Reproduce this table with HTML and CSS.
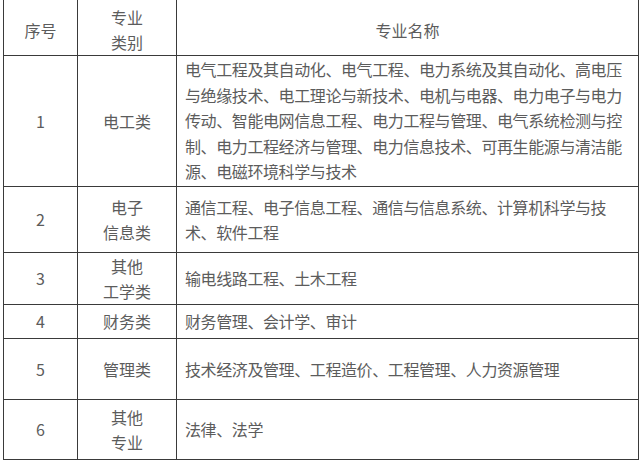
FILE: index.html
```html
<!DOCTYPE html>
<html lang="zh">
<head>
<meta charset="utf-8">
<link rel="stylesheet" href="styles.css">
</head>
<body>
<table class="majors">
  <colgroup>
    <col class="c-no">
    <col class="c-cat">
    <col class="c-name">
  </colgroup>
  <tr class="r-head">
    <td class="center">序号</td>
    <td class="center">专业<br>类别</td>
    <td class="center">专业名称</td>
  </tr>
  <tr class="r1">
    <td class="center">1</td>
    <td class="center">电工类</td>
    <td class="list">电气工程及其自动化、电气工程、电力系统及其自动化、高电压与绝缘技术、电工理论与新技术、电机与电器、电力电子与电力传动、智能电网信息工程、电力工程与管理、电气系统检测与控制、电力工程经济与管理、电力信息技术、可再生能源与清洁能源、电磁环境科学与技术</td>
  </tr>
  <tr class="r2">
    <td class="center">2</td>
    <td class="center">电子<br>信息类</td>
    <td class="list">通信工程、电子信息工程、通信与信息系统、计算机科学与技术、软件工程</td>
  </tr>
  <tr class="r3">
    <td class="center">3</td>
    <td class="center">其他<br>工学类</td>
    <td class="list">输电线路工程、土木工程</td>
  </tr>
  <tr class="r4">
    <td class="center">4</td>
    <td class="center">财务类</td>
    <td class="list">财务管理、会计学、审计</td>
  </tr>
  <tr class="r5">
    <td class="center">5</td>
    <td class="center">管理类</td>
    <td class="list">技术经济及管理、工程造价、工程管理、人力资源管理</td>
  </tr>
  <tr class="r6">
    <td class="center">6</td>
    <td class="center">其他<br>专业</td>
    <td class="list">法律、法学</td>
  </tr>
</table>
</body>
</html>
```

FILE: styles.css
```css
html, body {
  margin: 0;
  padding: 0;
  background: #ffffff;
}

body {
  padding-left: 3px;
  font-family: "Noto Sans CJK SC", "Microsoft YaHei", sans-serif;
  font-size: 16px;
  color: #5c5c5c;
}

.majors {
  margin-top: -1px;
  width: 635px;
  border-collapse: collapse;
  table-layout: fixed;
}

.c-no { width: 74px; }
.c-cat { width: 99px; }
.c-name { width: 462px; }

.majors td {
  border: 1px solid #3a3a3a;
  padding: 0 8px;
  line-height: 25px;
  vertical-align: middle;
}

.center {
  text-align: center;
}

.list {
  text-align: left;
  letter-spacing: -0.4px;
}

.r1 .list {
  line-height: 25.5px;
}

.r-head { height: 56px; }
.r-head td { padding-top: 5px; }
.r1 { height: 131px; }
.r2 { height: 66px; }
.r3 { height: 52px; }
.r4 { height: 34px; }
.r5 { height: 61px; }
.r6 { height: 60px; }
```
